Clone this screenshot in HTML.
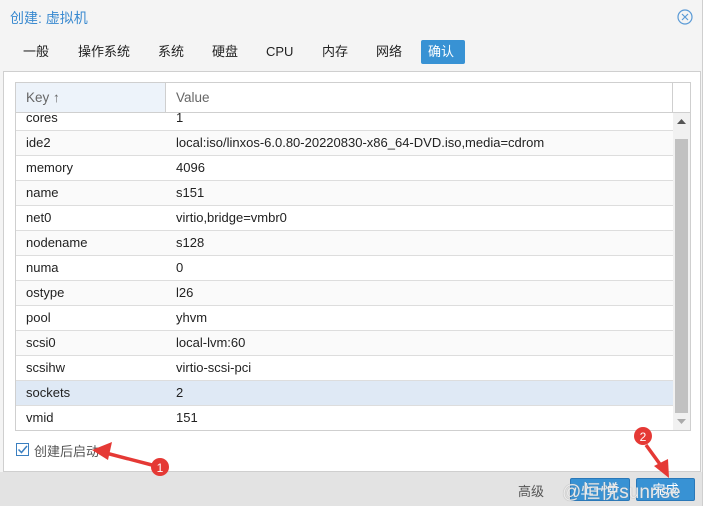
<!DOCTYPE html>
<html><head><meta charset="utf-8"><style>
*{margin:0;padding:0;box-sizing:border-box}
body{width:705px;height:510px;background:#fff;font-family:"Liberation Sans","Noto Sans CJK SC",sans-serif;font-size:13px;color:#222;position:relative;overflow:hidden}
.win{position:absolute;left:0;top:0;width:703px;height:506px;background:#f4f4f4;border-right:1px solid #cfcfcf;border-bottom:1px solid #cfcfcf}
.title{position:absolute;left:10px;top:8px;font-size:14px;color:#3a8ad0}
.close{position:absolute;left:677px;top:9px}
.tab{position:absolute;top:40px;height:24px;line-height:24px;font-size:13px;color:#222;padding:0 7px}
.tab.act{background:#3892d4;color:#fff;border-radius:2px}
.panel{position:absolute;left:3px;top:71px;width:698px;height:401px;background:#fff;border:1px solid #cfcfcf}
.grid{position:absolute;left:15px;top:82px;width:676px;height:349px;border:1px solid #cfcfcf;overflow:hidden;background:#fff}
.hdr{position:absolute;left:0;top:0;width:674px;height:30px;border-bottom:1px solid #cfcfcf;background:#fff;color:#666;font-size:13.5px}
.hdr .k{position:absolute;left:0;top:0;width:150px;height:29px;background:#edf3fa;border-right:1px solid #cfcfcf;padding:7px 0 0 10px}
.hdr .v{position:absolute;left:160px;top:7px}
.hdr .e{position:absolute;left:656px;top:0;height:29px;border-left:1px solid #cfcfcf;width:18px}
.row{position:absolute;left:0;width:657px;height:25px;border-bottom:1px solid #ddd;line-height:24px}
.row.alt{background:#fafafa}
.row.sel{background:#dfe9f5}
.row span{position:absolute;left:10px}
.row b{font-weight:normal;position:absolute;left:160px}
.sb{position:absolute;left:657px;top:30px;width:17px;height:318px;background:#f1f1f1}
.thumb{position:absolute;left:2px;top:26px;width:13px;height:274px;background:#c1c1c1}
.foot{position:absolute;left:0;top:472px;width:702px;height:34px;background:#e3e3e3}
.btn{position:absolute;top:478px;height:23px;background:#3892d4;border:1px solid #2a78b8;border-radius:2px;color:#fff;text-align:center;line-height:21px;font-size:13px}
.cb{position:absolute;left:16px;top:443px;width:13px;height:13px;border:1px solid #3a7fc0;background:#fff}
</style></head><body>
<div class="win">
<div class="title">创建: 虚拟机</div>
<svg class="close" width="16" height="16" viewBox="0 0 16 16"><circle cx="8" cy="8" r="7" fill="none" stroke="#5a9ad6" stroke-width="1.2"/><path d="M5 5L11 11M11 5L5 11" stroke="#5a9ad6" stroke-width="1.2"/></svg>
<div class="tab" style="left:16px">一般</div>
<div class="tab" style="left:71px">操作系统</div>
<div class="tab" style="left:151px">系统</div>
<div class="tab" style="left:205px">硬盘</div>
<div class="tab" style="left:259px">CPU</div>
<div class="tab" style="left:315px">内存</div>
<div class="tab" style="left:369px">网络</div>
<div class="tab act" style="left:421px;width:44px">确认</div>
<div class="panel"></div>
<div class="grid">
<div class="row" style="top:23px"><span>cores</span><b>1</b></div>
<div class="row alt" style="top:48px"><span>ide2</span><b>local:iso/linxos-6.0.80-20220830-x86_64-DVD.iso,media=cdrom</b></div>
<div class="row" style="top:73px"><span>memory</span><b>4096</b></div>
<div class="row alt" style="top:98px"><span>name</span><b>s151</b></div>
<div class="row" style="top:123px"><span>net0</span><b>virtio,bridge=vmbr0</b></div>
<div class="row alt" style="top:148px"><span>nodename</span><b>s128</b></div>
<div class="row" style="top:173px"><span>numa</span><b>0</b></div>
<div class="row alt" style="top:198px"><span>ostype</span><b>l26</b></div>
<div class="row" style="top:223px"><span>pool</span><b>yhvm</b></div>
<div class="row alt" style="top:248px"><span>scsi0</span><b>local-lvm:60</b></div>
<div class="row" style="top:273px"><span>scsihw</span><b>virtio-scsi-pci</b></div>
<div class="row sel" style="top:298px"><span>sockets</span><b>2</b></div>
<div class="row" style="top:323px"><span>vmid</span><b>151</b></div>
<div class="hdr"><div class="k">Key ↑</div><div class="v">Value</div><div class="e"></div></div>
<div class="sb"><svg style="position:absolute;left:4px;top:6px" width="9" height="6"><path d="M0 5L4.5 0L9 5Z" fill="#555"/></svg><div class="thumb"></div><svg style="position:absolute;left:4px;top:306px" width="9" height="6"><path d="M0 0L4.5 5L9 0Z" fill="#aaa"/></svg></div>
</div>
<div class="cb"><svg width="13" height="13" style="position:absolute;left:-1px;top:-1px"><path d="M2.5 6.5L5.5 9.5L11 3" stroke="#3a7fc0" stroke-width="1.5" fill="none"/></svg></div>
<div style="position:absolute;left:34px;top:441px;color:#555;font-size:13px">创建后启动</div>
<div class="foot"></div>
<div style="position:absolute;left:518px;top:481px;color:#555;font-size:13px">高级</div>
<div class="btn" style="left:570px;width:60px">上一步</div>
<div class="btn" style="left:636px;width:59px">完成</div>
<div style="position:absolute;left:562px;top:477px;color:rgba(255,255,255,.8);font-size:19px;text-shadow:0 0 1px #888">@恒悦sunrise</div>
<svg style="position:absolute;left:0;top:0" width="705" height="510">
<path d="M102 452L152 465" stroke="#e53935" stroke-width="3.5"/><path d="M92 450L112 442L108 460Z" fill="#e53935"/>
<circle cx="160" cy="467" r="9" fill="#e53935"/><text x="160" y="472" text-anchor="middle" fill="#fff" font-size="12" font-family="Liberation Sans">1</text>
<path d="M646 445L662 467" stroke="#e53935" stroke-width="3.5"/><path d="M669 478L654 466L668 459Z" fill="#e53935"/>
<circle cx="643" cy="436" r="9" fill="#e53935"/><text x="643" y="441" text-anchor="middle" fill="#fff" font-size="12" font-family="Liberation Sans">2</text>
</svg>
</div>
</body></html>
